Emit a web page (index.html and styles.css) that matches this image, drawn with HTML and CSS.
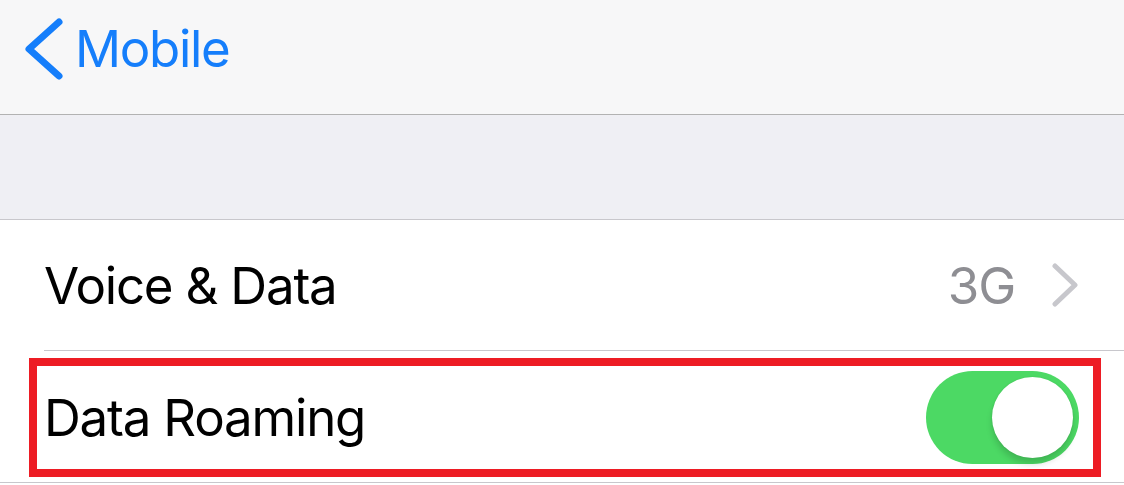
FILE: index.html
```html
<!DOCTYPE html>
<html lang="en">
<head>
    <meta charset="UTF-8">
    <meta name="viewport" content="width=device-width, initial-scale=1.0">
    <title>Mobile</title>
    <link rel="stylesheet" href="styles.css">
</head>
<body>

<div class="navbar">
    <svg class="back-icon" width="44" height="68" viewBox="0 0 44 68">
        <polyline points="39,8 9,35 39,62" fill="none" stroke="#157efb" stroke-width="7" stroke-linecap="round" stroke-linejoin="round"/>
    </svg>
    <span class="back-label">Mobile</span>
</div>

<div class="section-gap"></div>

<div class="list">
    <div class="row">
        <div class="row-inner">
            <span class="row-title">Voice &amp; Data</span>
            <span class="row-value">3G</span>
            <svg class="chevron" width="28" height="44" viewBox="0 0 28 44">
                <polyline points="3,3 23,22 3,41" fill="none" stroke="#c7c7cc" stroke-width="5" stroke-linecap="round" stroke-linejoin="round"/>
            </svg>
        </div>
    </div>
    <div class="row row-last">
        <div class="highlight">
            <span class="row-title">Data Roaming</span>
            <div class="switch on">
                <div class="knob"></div>
            </div>
        </div>
    </div>
</div>

</body>
</html>
```

FILE: styles.css
```css
body {
    font-family: 'Inter', 'Liberation Sans', sans-serif;
    margin: 0;
    background-color: #ffffff;
    width: 1124px;
}
.navbar {
    height: 115px;
    background-color: #f7f7f8;
    border-bottom: 1px solid #b2b2b2;
    display: flex;
    align-items: center;
    padding-left: 20px;
    padding-bottom: 18px;
    box-sizing: border-box;
}
.back-icon {
    display: block;
}
.back-label {
    color: #157efb;
    font-size: 51px;
    line-height: 1;
    letter-spacing: -1.3px;
    margin-left: 11px;
}
.section-gap {
    height: 104px;
    background-color: #efeff4;
    border-bottom: 1px solid #c8c7cc;
}
.list {
    background-color: white;
    border-bottom: 1px solid #c8c7cc;
}
.row {
    padding-left: 44px;
}
.row-inner {
    height: 130px;
    display: flex;
    align-items: center;
    padding-left: 0;
    padding-right: 44px;
    border-bottom: 1px solid #c8c7cc;
}
.row-title {
    font-size: 51px;
    line-height: 1;
    letter-spacing: -1.2px;
    color: #000;
    flex: 1;
}
.row-value {
    font-size: 51px;
    line-height: 1;
    letter-spacing: -1.2px;
    color: #8e8e93;
    margin-right: 37px;
}
.chevron {
    display: block;
}
.row-last {
    padding: 7px 23px 5px 29px;
    height: 131px;
    box-sizing: border-box;
}
.highlight {
    height: 100%;
    box-sizing: border-box;
    border: 8px solid #ed1c24;
    display: flex;
    align-items: center;
    padding-left: 7px;
    padding-right: 14px;
}
.switch {
    width: 153px;
    height: 93px;
    border-radius: 47px;
    background-color: #e5e5ea;
    display: flex;
    align-items: center;
    padding: 0 6px;
    box-sizing: border-box;
}
.switch.on {
    background-color: #4cd964;
    justify-content: flex-end;
}
.knob {
    width: 81px;
    height: 81px;
    border-radius: 50%;
    background-color: white;
    box-shadow: 0 6px 6px rgba(0, 0, 0, 0.15), 0 0 2px rgba(0, 0, 0, 0.1);
}
```
